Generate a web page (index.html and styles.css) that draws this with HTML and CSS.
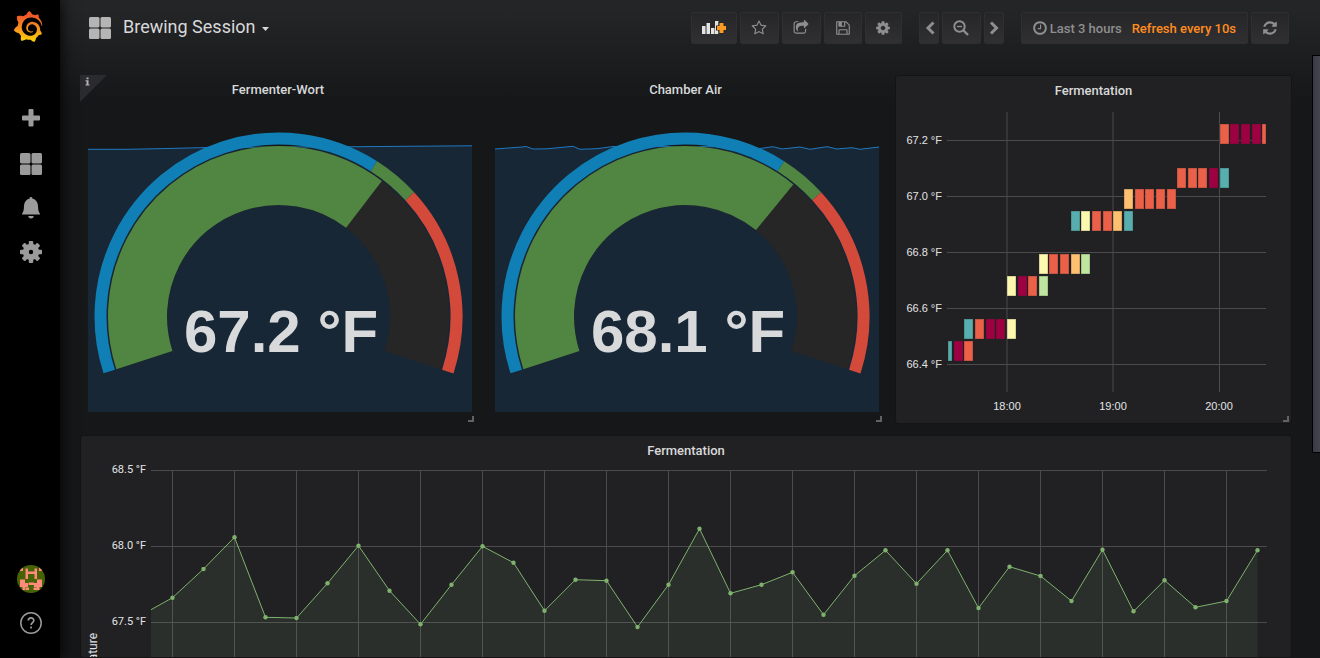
FILE: index.html
```html
<!DOCTYPE html>
<html lang="en">
<head>
<meta charset="utf-8">
<meta name="viewport" content="width=device-width, initial-scale=1">
<title>Brewing Session</title>
<link rel="stylesheet" href="styles.css">
</head>
<body>
<svg class="defs" aria-hidden="true">
  <symbol id="apps" viewBox="0 0 22 22">
    <rect width="10.500" height="10.500" x="0" y="0" rx="1.500"/><rect width="10.500" height="10.500" x="11.500" y="0" rx="1.500"/>
    <rect width="10.500" height="10.500" x="0" y="11.500" rx="1.500"/><rect width="10.500" height="10.500" x="11.500" y="11.500" rx="1.500"/>
  </symbol>
</svg>
<nav class="sidemenu" aria-label="Main menu">
  <a class="logo" href="#" aria-label="Home">
    <svg viewBox="0 0 351 365" width="30" height="31">
      <linearGradient id="flame" gradientUnits="userSpaceOnUse" x1="175" y1="400" x2="175" y2="60">
        <stop offset="0" stop-color="#ffe600"/><stop offset="0.5" stop-color="#f99b1c"/><stop offset="1" stop-color="#f05a28"/>
      </linearGradient>
      <path fill="url(#flame)" d="M342,161.2c-0.6-6.1-1.6-13.1-3.6-20.9c-2-7.7-5-16.2-9.4-25c-4.400-8.800-10.100-17.900-17.500-26.800c-2.900-3.500-6.100-6.900-9.500-10.200c5.100-20.300-6.200-37.900-6.200-37.900c-19.500-1.200-31.900,6.100-36.500,9.400c-0.800-0.300-1.500-0.700-2.300-1c-3.300-1.300-6.700-2.600-10.300-3.700c-3.500-1.100-7.100-2.100-10.800-3c-3.700-0.900-7.400-1.600-11.200-2.200c-0.700-0.100-1.300-0.200-2-0.300c-8.500-27.200-32.900-38.600-32.900-38.600c-27.300,17.300-32.400,41.500-32.400,41.500s-0.100,0.500-0.300,1.400c-1.500,0.400-3,0.900-4.500,1.300c-2.100,0.600-4.200,1.400-6.200,2.200c-2.100,0.800-4.100,1.600-6.200,2.500c-4.100,1.800-8.200,3.800-12.200,6c-3.900,2.200-7.700,4.600-11.400,7.100c-0.500-0.200-1-0.400-1-0.400c-37.800-14.400-71.300,2.900-71.300,2.900c-3.100,40.200,15.100,65.500,18.700,70.100c-0.900,2.500-1.700,5-2.500,7.500c-2.800,9.100-4.900,18.400-6.200,28.100c-0.200,1.400-0.400,2.800-0.500,4.200C18.800,192.700,8.500,228,8.500,228c29.100,33.500,63.100,35.600,63.100,35.600c0,0,0.100-0.100,0.100-0.100c4.300,7.700,9.300,15,14.900,21.900c2.400,2.900,4.800,5.600,7.400,8.300c-10.600,30.400,1.500,55.600,1.500,55.600c32.400,1.200,53.700-14.200,58.200-17.700c3.200,1.100,6.500,2.100,9.800,2.900c10,2.600,20.200,4.100,30.400,4.500c2.500,0.100,5.100,0.200,7.600,0.100l1.200,0l0.800,0l1.600,0l1.600-0.100l0,0.100c15.300,21.800,42.100,24.900,42.100,24.900c19.100-20.100,20.200-40.100,20.200-44.400l0,0c0,0,0-0.100,0-0.300c0-0.400,0-0.600,0-0.600l0,0c0-0.300,0-0.600,0-0.900c4-2.800,7.800-5.800,11.400-9.100c7.600-6.900,14.300-14.800,19.900-23.300c0.500-0.800,1-1.600,1.500-2.400c21.600,1.200,36.900-13.400,36.900-13.400c-3.600-22.500-16.400-33.500-19.100-35.600l0,0c0,0-0.100-0.100-0.300-0.200c-0.200-0.100-0.200-0.200-0.200-0.200c0,0,0,0,0,0c-0.100-0.100-0.300-0.200-0.500-0.300c0.100-1.400,0.200-2.700,0.300-4.100c0.200-2.400,0.200-4.900,0.200-7.300l0-1.800l0-0.900l0-0.500c0-0.600,0-0.400,0-0.600l-0.100-1.500l-0.100-2c0-0.700-0.100-1.300-0.200-1.900c-0.100-0.600-0.100-1.300-0.200-1.900l-0.200-1.900l-0.300-1.900c-0.400-2.500-0.800-4.900-1.400-7.400c-2.300-9.700-6.100-18.900-11-27.200c-5-8.300-11.200-15.600-18.300-21.800c-7-6.200-14.900-11.200-23.100-14.900c-8.300-3.700-16.900-6.100-25.500-7.200c-4.300-0.600-8.600-0.800-12.900-0.700l-1.600,0l-0.400,0c-0.100,0-0.600,0-0.500,0l-0.700,0l-1.600,0.100c-0.600,0-1.200,0.100-1.700,0.100c-2.200,0.200-4.400,0.500-6.500,0.900c-8.600,1.600-16.700,4.700-23.800,9c-7.100,4.300-13.300,9.600-18.300,15.600c-5,6-8.900,12.700-11.600,19.600c-2.700,6.900-4.200,14.100-4.600,21c-0.100,1.700-0.100,3.500-0.100,5.200c0,0.400,0,0.900,0,1.300l0.100,1.400c0.100,0.800,0.100,1.700,0.200,2.500c0.300,3.500,1,6.900,1.900,10.100c1.900,6.500,4.900,12.400,8.600,17.400c3.700,5,8.200,9.100,12.900,12.400c4.700,3.200,9.800,5.500,14.800,7c5,1.500,10,2.100,14.700,2.100c0.600,0,1.200,0,1.700,0c0.300,0,0.600,0,0.900,0c0.300,0,0.600,0,0.900-0.100c0.500,0,1-0.100,1.500-0.100c0.100,0,0.300,0,0.400-0.100l0.500-0.100c0.300,0,0.600-0.100,0.900-0.100c0.600-0.100,1.100-0.200,1.700-0.300c0.600-0.100,1.100-0.200,1.600-0.400c1.100-0.200,2.100-0.600,3.100-0.900c2-0.700,4-1.500,5.700-2.400c1.800-0.900,3.400-2,5-3c0.400-0.300,0.900-0.600,1.300-1c1.600-1.300,1.900-3.700,0.600-5.300c-1.100-1.400-3.100-1.800-4.700-0.900c-0.400,0.200-0.800,0.400-1.200,0.600c-1.400,0.700-2.800,1.300-4.300,1.800c-1.500,0.500-3.100,0.900-4.700,1.200c-0.800,0.100-1.600,0.200-2.500,0.300c-0.400,0-0.800,0.100-1.300,0.100c-0.400,0-0.900,0-1.200,0c-0.400,0-0.800,0-1.200,0c-0.500,0-1,0-1.500-0.100c0,0-0.300,0-0.100,0l-0.200,0l-0.300,0c-0.200,0-0.500,0-0.700-0.100c-0.500-0.100-0.900-0.100-1.400-0.200c-3.700-0.500-7.400-1.600-10.900-3.200c-3.600-1.600-7-3.800-10.100-6.600c-3.100-2.800-5.800-6.100-7.900-9.900c-2.100-3.800-3.600-8-4.300-12.400c-0.300-2.200-0.500-4.500-0.400-6.700c0-0.600,0.100-1.200,0.100-1.800c0,0.200,0-0.100,0-0.100l0-0.200l0-0.500c0-0.300,0.100-0.600,0.100-0.900c0.100-1.200,0.300-2.400,0.500-3.600c1.700-9.600,6.500-19,13.900-26.100c1.900-1.800,3.900-3.400,6-4.900c2.100-1.500,4.400-2.800,6.800-3.900c2.400-1.100,4.800-2,7.400-2.700c2.500-0.700,5.100-1.100,7.800-1.400c1.300-0.100,2.600-0.200,4-0.200c0.400,0,0.600,0,0.900,0l1.100,0l0.700,0c0.300,0,0,0,0.100,0l0.300,0l1.100,0.100c2.900,0.200,5.700,0.600,8.500,1.300c5.600,1.200,11.100,3.300,16.200,6.100c10.200,5.700,18.900,14.500,24.200,25.100c2.700,5.300,4.600,11,5.500,16.900c0.200,1.500,0.400,3,0.500,4.500l0.100,1.100l0.100,1.100c0,0.400,0,0.800,0,1.100c0,0.400,0,0.800,0,1.100l0,1l0,1.100c0,0.700-0.100,1.900-0.100,2.600c-0.100,1.600-0.300,3.300-0.500,4.900c-0.200,1.600-0.500,3.200-0.800,4.800c-0.300,1.600-0.700,3.200-1.100,4.700c-0.800,3.100-1.800,6.200-3,9.300c-2.400,6-5.600,11.800-9.400,17.100c-7.700,10.600-18.200,19.200-30.200,24.700c-6,2.700-12.300,4.700-18.800,5.700c-3.200,0.600-6.500,0.900-9.800,1l-0.600,0l-0.500,0l-1.100,0l-1.600,0l-0.800,0c0.400,0-0.100,0-0.100,0l-0.300,0c-1.800,0-3.500-0.100-5.300-0.300c-7-0.500-13.900-1.800-20.700-3.700c-6.700-1.900-13.200-4.600-19.400-7.800c-12.300-6.600-23.400-15.600-32-26.500c-4.300-5.400-8.100-11.300-11.200-17.400c-3.100-6.100-5.600-12.600-7.400-19.100c-1.800-6.600-2.900-13.300-3.400-20.100l-0.100-1.300l0-0.300l0-0.300l0-0.600l0-1.100l0-0.300l0-0.400l0-0.800l0-1.600l0-0.300c0,0,0,0.100,0-0.100l0-0.600c0-0.800,0-1.700,0-2.500c0.100-3.300,0.400-6.800,0.800-10.200c0.400-3.400,1-6.900,1.700-10.300c0.700-3.400,1.500-6.800,2.500-10.200c1.900-6.700,4.300-13.200,7.100-19.300c5.700-12.200,13.100-23.100,22-31.800c2.200-2.200,4.500-4.200,6.900-6.200c2.400-1.900,4.900-3.700,7.500-5.400c2.500-1.700,5.200-3.200,7.900-4.600c1.300-0.700,2.700-1.400,4.100-2c0.700-0.300,1.400-0.600,2.100-0.900c0.700-0.300,1.400-0.600,2.100-0.900c2.800-1.200,5.700-2.200,8.700-3.100c0.700-0.200,1.500-0.400,2.200-0.700c0.700-0.200,1.500-0.400,2.200-0.600c1.500-0.400,3-0.800,4.500-1.100c0.700-0.200,1.500-0.300,2.300-0.500c0.800-0.200,1.500-0.300,2.300-0.500c0.800-0.100,1.500-0.300,2.300-0.400l1.100-0.200l1.200-0.200c0.800-0.100,1.500-0.200,2.300-0.300c0.900-0.100,1.700-0.200,2.600-0.300c0.700-0.100,1.900-0.200,2.600-0.300c0.500-0.100,1.100-0.100,1.600-0.200l1.100-0.100l0.500-0.100l0.600,0c0.900-0.100,1.700-0.100,2.600-0.200l1.300-0.100c0,0,0.500,0,0.100,0l0.300,0l0.600,0c0.700,0,1.500-0.100,2.200-0.100c2.900-0.100,5.900-0.100,8.800,0c5.800,0.200,11.500,0.900,17,1.900c11.100,2.100,21.500,5.600,31,10.300c9.500,4.600,17.900,10.300,25.300,16.500c0.500,0.400,0.900,0.800,1.400,1.200c0.400,0.400,0.900,0.800,1.300,1.200c0.900,0.800,1.700,1.600,2.600,2.400c0.900,0.800,1.700,1.600,2.500,2.400c0.800,0.800,1.600,1.600,2.400,2.500c3.100,3.300,6,6.600,8.600,10c5.200,6.700,9.400,13.500,12.700,19.900c0.200,0.400,0.400,0.800,0.600,1.200c0.200,0.400,0.400,0.800,0.600,1.200c0.400,0.800,0.800,1.600,1.100,2.400c0.400,0.800,0.700,1.500,1.100,2.300c0.300,0.800,0.700,1.500,1,2.300c1.200,3,2.400,5.900,3.300,8.600c1.500,4.400,2.600,8.300,3.500,11.700c0.300,1.400,1.600,2.300,3,2.100c1.500-0.100,2.600-1.300,2.600-2.800C342.600,170.400,342.500,166.100,342,161.200z"/>
    </svg>
  </a>
  <a class="side-link" href="#" aria-label="Create">
    <svg class="side-icon" viewBox="0 0 22 22"><path d="M8.500 3a1 1 0 0 1 1-1h3a1 1 0 0 1 1 1v5.500h5.500a1 1 0 0 1 1 1v3a1 1 0 0 1-1 1h-5.500v5a1 1 0 0 1-1 1h-3a1 1 0 0 1-1-1v-5h-5.500a1 1 0 0 1-1-1v-3a1 1 0 0 1 1-1h5.500z"/></svg>
  </a>
  <a class="side-link" href="#" aria-label="Dashboards"><svg class="side-icon"><use href="#apps"/></svg></a>
  <a class="side-link" href="#" aria-label="Alerting">
    <svg class="side-icon" viewBox="0 0 22 22"><path d="M11 0q1.400 0 1.400 1.400C16 2.300 17.800 5 18 9c.1 4 .6 5.700 1.600 7q.4.600.4 1.500H2q0-.9.400-1.500c1-1.300 1.500-3 1.600-7 .2-4 2-6.700 5.600-7.600Q9.600 0 11 0z"/><path d="M8.300 19h5.400a2.700 2.400 0 0 1-5.400 0z"/></svg>
  </a>
  <a class="side-link" href="#" aria-label="Configuration">
    <svg class="side-icon" viewBox="0 0 22 22"><circle cx="11" cy="11" r="5.200" fill="none" stroke="#9b9b9b" stroke-width="6"/>
      <g id="teeth"><rect x="8.800" y="0" width="4.400" height="4.500" rx="1"/><rect x="8.800" y="17.500" width="4.400" height="4.500" rx="1"/><rect x="0" y="8.800" width="4.500" height="4.400" rx="1"/><rect x="17.500" y="8.800" width="4.500" height="4.400" rx="1"/></g>
      <use href="#teeth" transform="rotate(45 11 11)"/></svg>
  </a>
  <div class="side-bottom">
    <a class="side-link" href="#" aria-label="Profile">
      <svg class="avatar" viewBox="0 0 28 28">
        <clipPath id="round"><circle cx="14" cy="14" r="14"/></clipPath>
        <g clip-path="url(#round)">
          <rect width="28" height="28" fill="#466205"/>
          <path fill="#ff8b7c" d="M3 3h3v3H3zM22 3h3v3h-3zM8.500 3.500H11V6.500h6.500v-3H20V14h-2.500V9H11v5H8.500zM3 14.500h5v3.500h3v4H8.500v3H5.500v-3H3zM20 14.500h5V22h-2.500v3h-3v-3h-2.500v-4h3zM11.500 17.500h5.500v2.500h-5.500zM9 22.500h3v2.500H9zM16.500 22.500h3v2.500h-3z"/>
        </g>
      </svg>
    </a>
    <a class="side-link" href="#" aria-label="Help">
      <svg class="side-icon help" viewBox="0 0 22 22"><circle cx="11" cy="11" r="10.200" stroke-width="1.500"/><path stroke-width="1.700" d="M8.300 8.600c.1-3.600 5.500-3.500 5.500-.2 0 2-2.700 2.300-2.700 4.700M11.100 14.600v1.800"/></svg>
    </a>
  </div>
</nav>

<div class="page">
  <header class="toolbar">
    <h1 class="dash-title">
      <button class="title-button" type="button">
        <svg class="title-icon"><use href="#apps"/></svg>
        <span class="title-text">Brewing Session</span>
        <svg class="caret" viewBox="0 0 7 4"><path d="M0 0h7L3.500 4z"/></svg>
      </button>
    </h1>
    <div class="button-group">
      <button class="btn btn-add" type="button" aria-label="Add panel">
        <svg viewBox="0 0 24 14" width="24" height="14">
          <path fill="#e3e3e3" d="M0 5h3.500v8H0zM4.500 2h3.500v11H4.500zM9 7h3.500v6H9zM13 0h3.500v13H13z"/>
          <path fill="#262628" d="M16.500 1h6v3.500H24v5h-1.500V13h-6V9.500H14v-5h2.500z"/>
          <path fill="#fa9a22" d="M17.500 2h4v3H24v4h-2.500v3h-4V9H15V5h2.500z"/>
        </svg>
      </button>
      <button class="btn" type="button" aria-label="Mark as favorite"><svg class="icon" viewBox="0 0 1792 1792"><path d="M1201 1004l306-297-422-62-189-382-189 382-422 62 306 297-73 421 378-199 377 199zm527-357q0 22-26 48l-363 354 86 500q1 7 1 20 0 50-41 50-19 0-40-12l-449-236-449 236q-22 12-40 12-21 0-31.500-14.500t-10.500-35.500q0-6 2-20l86-500-364-354q-25-27-25-48 0-37 56-46l502-73 225-455q19-41 49-41t49 41l225 455 502 73q56 9 56 46z"/></svg></button>
      <button class="btn" type="button" aria-label="Share dashboard"><svg class="icon" viewBox="0 0 1792 1792"><path d="M1472 989v259q0 119-84.500 203.500t-203.500 84.500h-832q-119 0-203.500-84.500t-84.500-203.500v-832q0-119 84.500-203.500t203.500-84.500h255q13 0 22.500 9.500t9.500 22.500q0 27-26 32-77 26-133 60-10 4-16 4h-112q-66 0-113 47t-47 113v832q0 66 47 113t113 47h832q66 0 113-47t47-113v-214q0-19 18-29 28-13 54-37 16-16 35-8 21 9 21 29zm237-496l-384 384q-18 19-45 19-12 0-25-5-39-17-39-59v-192h-160q-323 0-438 131-119 137-74 473 3 23-20 34-8 2-12 2-16 0-26-13-10-14-21-31t-39.500-68.500-49.500-99.500-38.500-114-17.500-122q0-49 3.500-91t14-90 28-88 47-81.500 68.500-74 94.500-61.500 124.500-48.500 159.500-30.500 196.500-11h160v-192q0-42 39-59 13-5 25-5 26 0 45 19l384 384q19 19 19 45t-19 45z"/></svg></button>
      <button class="btn btn-save" type="button" aria-label="Save dashboard"><svg class="icon" viewBox="0 0 1792 1792"><path d="M512 1536h768v-384h-768v384zm896 0h128v-896q0-14-10-38.500t-20-34.500l-281-281q-10-10-34-20t-39-10v416q0 40-28 68t-68 28h-576q-40 0-68-28t-28-68v-416h-128v1280h128v-416q0-40 28-68t68-28h832q40 0 68 28t28 68v416zm-384-928v-320q0-13-9.500-22.500t-22.500-9.500h-192q-13 0-22.500 9.500t-9.500 22.500v320q0 13 9.500 22.500t22.500 9.500h192q13 0 22.500-9.500t9.500-22.500zm640 32v928q0 40-28 68t-68 28h-1344q-40 0-68-28t-28-68v-1344q0-40 28-68t68-28h928q40 0 88 20t76 48l280 280q28 28 48 76t20 88z"/></svg></button>
      <button class="btn btn-settings" type="button" aria-label="Settings"><svg class="icon" viewBox="0 0 1792 1792"><path d="M1152 896q0-106-75-181t-181-75-181 75-75 181 75 181 181 75 181-75 75-181zm512-109v222q0 12-8 23t-20 13l-185 28q-19 54-39 91 35 50 107 138 10 12 10 25t-9 23q-27 37-99 108t-94 71q-12 0-26-9l-138-108q-44 23-91 38-16 136-29 186-7 28-36 28h-222q-14 0-24.500-8.500t-11.500-21.500l-28-184q-49-16-90-37l-141 107q-10 9-25 9-14 0-25-11-126-114-165-168-7-10-7-23 0-12 8-23 15-21 51-66.500t54-70.500q-27-50-41-99l-183-27q-13-2-21-12.500t-8-23.500v-222q0-12 8-23t19-13l186-28q14-46 39-92-40-57-107-138-10-12-10-24 0-10 9-23 26-36 98.500-107.500t94.500-71.500q13 0 26 10l138 107q44-23 91-38 16-136 29-186 7-28 36-28h222q14 0 24.500 8.500t11.500 21.500l28 184q49 16 90 37l142-107q9-9 24-9 13 0 25 10 129 119 165 170 7 8 7 22 0 12-8 23-15 21-51 66.500t-54 70.500q26 50 41 98l183 28q13 2 21 12.500t8 23.500z"/></svg></button>
    </div>
    <div class="button-group">
      <button class="btn btn-step" type="button" aria-label="Shift time back"><svg class="icon line" viewBox="0 0 16 16"><path stroke-width="3" d="M12.500 2.500 7 8l5.500 5.500"/></svg></button>
      <button class="btn" type="button" aria-label="Zoom out"><svg class="icon line" viewBox="0 0 16 16"><circle cx="6.500" cy="6.500" r="5.200" stroke-width="2"/><path stroke-width="2.400" d="m10.500 10.500 4.500 4.500"/><path stroke-width="1.400" d="M4 6.500h5"/></svg></button>
      <button class="btn btn-step" type="button" aria-label="Shift time forward"><svg class="icon line" viewBox="0 0 16 16"><path stroke-width="3" d="M5 2.500 10.500 8 5 13.500"/></svg></button>
    </div>
    <div class="button-group">
      <button class="btn btn-time" type="button">
        <svg class="icon" viewBox="0 0 1792 1792"><path d="M1024 544v448q0 14-9 23t-23 9h-320q-14 0-23-9t-9-23v-64q0-14 9-23t23-9h224v-352q0-14 9-23t23-9h64q14 0 23 9t9 23zm416 352q0-148-73-273t-198-198-273-73-273 73-198 198-73 273 73 273 198 198 273 73 273-73 198-198 73-273zm224 0q0 209-103 385.500t-279.500 279.500-385.500 103-385.500-103-279.500-279.500-103-385.500 103-385.500 279.500-279.500 385.500-103 385.500 103 279.500 279.500 103 385.500z"/></svg>
        <span>Last 3 hours</span>
        <span class="refresh-rate">Refresh every 10s</span>
      </button>
      <button class="btn btn-refresh" type="button" aria-label="Refresh"><svg class="icon" viewBox="0 0 1792 1792"><path d="M1639 1056q0 5-1 7-64 268-268 434.500t-478 166.500q-146 0-282.500-55t-243.500-157l-129 129q-19 19-45 19t-45-19-19-45v-448q0-26 19-45t45-19h448q26 0 45 19t19 45-19 45l-137 137q71 66 161 102t187 36q134 0 250-65t186-179q11-17 53-117 8-23 30-23h192q13 0 22.500 9.500t9.500 22.500zm25-800v448q0 26-19 45t-45 19h-448q-26 0-45-19t-19-45 19-45l138-138q-148-137-349-137-134 0-250 65t-186 179q-11 17-53 117-8 23-30 23h-199q-13 0-22.500-9.500t-9.500-22.500v-7q65-268 270-434.500t480-166.500q146 0 284 55.500t245 156.500l130-129q19-19 45-19t45 19 19 45z"/></svg></button>
    </div>
  </header>

  <main class="dashboard">
    <section class="panel gauge-panel">
      <svg class="info-corner" viewBox="0 0 27 27" aria-label="Panel info"><path fill="#2b2b2f" d="M0 0h27L0 27z"/><path fill="#b4b4b4" d="M6.500 2.500h2v1.800h-2zM5.500 5.300h3v4.200h1v1h-4v-1h1V6.300h-1z"/></svg>
      <h2 class="panel-title">Fermenter-Wort</h2>
      <svg class="chart" viewBox="0 0 384 309" role="img" aria-label="Fermenter-Wort gauge">
        <path class="spark-area" d="M0 46.300 40 46.300 80 45.500 120 44.500 200 44 260 43.800 330 43.200 384 42.800V309H0z"/>
        <path class="spark-line" d="M0 46.300 40 46.300 80 45.500 120 44.500 200 44 260 43.800 330 43.200 384 42.800"/>
        <g transform="translate(190.500 213.500) rotate(162)">
          <circle class="dial rest" r="141" pathLength="360" stroke-dasharray="216 360"/>
          <circle class="dial value" r="141" pathLength="360" stroke-dasharray="145.300 360"/>
          <circle class="ring cold" r="178" pathLength="360" stroke-dasharray="140.400 360"/>
          <circle class="ring good" r="178" pathLength="360" stroke-dasharray="15.100 360" transform="rotate(140.400)"/>
          <circle class="ring hot" r="178" pathLength="360" stroke-dasharray="60.500 360" transform="rotate(155.500)"/>
        </g>
        <text class="reading" x="193" y="249">67.2 °F</text>
      </svg>
      <span class="resize"></span>
    </section>

    <section class="panel gauge-panel">
      <h2 class="panel-title">Chamber Air</h2>
      <svg class="chart" viewBox="0 0 385 309" role="img" aria-label="Chamber Air gauge">
        <path class="spark-area" d="M0 46 27 44 31 43.500 38 46 52 45.800 78 43.300 85 46.300 102 45.700 118 43.500 220 43.700 233 46.300 265 45.500 278 43.700 287 46 305 44 315 46.300 332 43.700 342 46 357 44.700 365 46.300 384 44V309H0z"/>
        <path class="spark-line" d="M0 46 27 44 31 43.500 38 46 52 45.800 78 43.300 85 46.300 102 45.700 118 43.500 220 43.700 233 46.300 265 45.500 278 43.700 287 46 305 44 315 46.300 332 43.700 342 46 357 44.700 365 46.300 384 44"/>
        <g transform="translate(190.500 213.500) rotate(162)">
          <circle class="dial rest" r="141" pathLength="360" stroke-dasharray="216 360"/>
          <circle class="dial value" r="141" pathLength="360" stroke-dasharray="147.200 360"/>
          <circle class="ring cold" r="178" pathLength="360" stroke-dasharray="140.400 360"/>
          <circle class="ring good" r="178" pathLength="360" stroke-dasharray="15.100 360" transform="rotate(140.400)"/>
          <circle class="ring hot" r="178" pathLength="360" stroke-dasharray="60.500 360" transform="rotate(155.500)"/>
        </g>
        <text class="reading" x="193" y="249">68.1 °F</text>
      </svg>
      <span class="resize"></span>
    </section>

    <section class="panel framed">
      <h2 class="panel-title">Fermentation</h2>
      <svg class="chart heatmap" viewBox="0 0 395 319" role="img" aria-label="Fermentation heatmap">
        <path class="grid" d="M51 36.500H370M51 92.500H370M51 148.500H370M51 204.500H370M51 260.500H370M111 8V288M217 8V288M323.500 8V288"/>
        <g text-anchor="end">
          <text x="46" y="40">67.2 °F</text><text x="46" y="96">67.0 °F</text><text x="46" y="152">66.8 °F</text><text x="46" y="208">66.6 °F</text><text x="46" y="264">66.4 °F</text>
        </g>
        <g text-anchor="middle"><text x="111" y="306">18:00</text><text x="217" y="306">19:00</text><text x="323" y="306">20:00</text></g>
        <g transform="translate(0 20)"><rect class="cell c2" x="324"/><rect class="cell c1" x="334"/><rect class="cell c1" x="345"/><rect class="cell c1" x="356"/><rect class="cell c2 cut" x="366"/></g>
        <g transform="translate(0 64)"><rect class="cell c2" x="281"/><rect class="cell c2" x="292"/><rect class="cell c2" x="302"/><rect class="cell c1" x="313"/><rect class="cell c6" x="324"/></g>
        <g transform="translate(0 85)"><rect class="cell c3" x="228"/><rect class="cell c2" x="239"/><rect class="cell c2" x="249"/><rect class="cell c2" x="260"/><rect class="cell c2" x="271"/></g>
        <g transform="translate(0 107)"><rect class="cell c6" x="175"/><rect class="cell c4" x="185"/><rect class="cell c2" x="196"/><rect class="cell c2" x="207"/><rect class="cell c3" x="217"/><rect class="cell c6" x="228"/></g>
        <g transform="translate(0 150)"><rect class="cell c4" x="143"/><rect class="cell c2" x="153"/><rect class="cell c2" x="164"/><rect class="cell c3" x="175"/><rect class="cell c5" x="185"/></g>
        <g transform="translate(0 172)"><rect class="cell c4" x="111"/><rect class="cell c1" x="122"/><rect class="cell c2" x="132"/><rect class="cell c5" x="143"/></g>
        <g transform="translate(0 215)"><rect class="cell c6" x="68"/><rect class="cell c2" x="79"/><rect class="cell c1" x="90"/><rect class="cell c1" x="100"/><rect class="cell c4" x="111"/></g>
        <g transform="translate(0 237)"><rect class="cell c6 cut" x="52"/><rect class="cell c1" x="58"/><rect class="cell c2" x="68"/></g>
      </svg>
      <span class="resize"></span>
    </section>

    <section class="panel framed wide">
      <h2 class="panel-title">Fermentation</h2>
      <svg class="chart series" viewBox="0 0 1210 193" role="img" aria-label="Fermentation temperature graph">
        <marker id="dot" viewBox="0 0 5 5" refX="2.500" refY="2.500" markerWidth="5" markerHeight="5" markerUnits="userSpaceOnUse"><circle cx="2.500" cy="2.500" r="2.200" fill="#7eb26d"/></marker>
        <path class="grid" d="M70 6.500H1186M70 82.500H1186M70 158.500H1186M91.500 6V193M153.500 6V193M215.500 6V193M277.500 6V193M339.500 6V193M401.500 6V193M463.500 6V193M525.500 6V193M587.500 6V193M649.500 6V193M711.500 6V193M773.500 6V193M835.500 6V193M897.500 6V193M959.500 6V193M1021.500 6V193M1083.500 6V193M1145.500 6V193"/>
        <path class="series-area" d="M70 145.700 91.500 133.700 122.500 105 153.500 73.300 184.500 153.300 215.500 154 246.500 119.300 277.500 81.700 308.500 126.700 339.500 160.300 370.500 120.700 401.500 82.300 432.500 98.700 463.500 146.700 494.500 115.700 525.500 116.700 556.500 163 587.500 120.700 618.500 64.700 649.500 129.300 680.500 120.700 711.500 108.300 742.500 150.700 773.500 111.700 804.500 86.300 835.500 119.700 866.500 86.300 897.500 144 928.500 102.700 959.500 112 990.500 137 1021.500 85.700 1052.500 147.300 1083.500 116.300 1114.500 143.300 1145.500 137 1176.500 86.300V193H70z"/>
        <path class="series-line" d="M70 145.700 91.500 133.700 122.500 105 153.500 73.300 184.500 153.300 215.500 154 246.500 119.300 277.500 81.700 308.500 126.700 339.500 160.300 370.500 120.700 401.500 82.300 432.500 98.700 463.500 146.700 494.500 115.700 525.500 116.700 556.500 163 587.500 120.700 618.500 64.700 649.500 129.300 680.500 120.700 711.500 108.300 742.500 150.700 773.500 111.700 804.500 86.300 835.500 119.700 866.500 86.300 897.500 144 928.500 102.700 959.500 112 990.500 137 1021.500 85.700 1052.500 147.300 1083.500 116.300 1114.500 143.300 1145.500 137 1176.500 86.300"/>
        <g text-anchor="end"><text x="65" y="9">68.5 °F</text><text x="65" y="85">68.0 °F</text><text x="65" y="161">67.5 °F</text><text class="axis-name" transform="translate(16 169) rotate(-90)">Temperature</text></g>
      </svg>
    </section>
  </main>
  <div class="scroll-thumb" aria-hidden="true"></div>
</div>
</body>
</html>
```
FILE: styles.css
```css
* {
  box-sizing: border-box;
}

body {
  margin: 0;
  display: flex;
  height: 100vh;
  overflow: hidden;
  background: #161719;
  color: #d8d9da;
  font-family: Roboto, "Liberation Sans", sans-serif;
  font-size: 13px;
}

svg {
  display: block;
}

.defs {
  position: absolute;
  width: 0;
  height: 0;
}

button {
  font: inherit;
  color: inherit;
  cursor: pointer;
}

/* Side menu */
.sidemenu {
  flex: none;
  width: 60px;
  display: flex;
  flex-direction: column;
  background: #000;
  box-shadow: 0 0 15px #000;
  z-index: 1;
}

.logo {
  padding: 11px 0 0 13px;
  margin-bottom: 54px;
}

.side-link {
  display: flex;
  align-items: center;
  justify-content: center;
  height: 44px;
  padding-left: 2px;
}

.logo + .side-link {
  margin-bottom: 2px;
}

.side-icon {
  width: 22px;
  height: 22px;
  fill: #9b9b9b;
}

.side-icon.help {
  fill: none;
  stroke: #9b9b9b;
}

.side-bottom {
  margin-top: auto;
  padding-bottom: 13px;
}

.avatar {
  width: 28px;
  height: 28px;
}

/* Page and toolbar */
.page {
  position: relative;
  flex: 1;
  min-width: 0;
  overflow: hidden;
  background: linear-gradient(180deg, #242527 10px, #161719 100px);
}

.toolbar {
  display: flex;
  align-items: center;
  gap: 17px;
  height: 56px;
  padding: 0 31px 0 29px;
}

.dash-title {
  flex: 1;
  margin: 0;
  font-size: 18px;
  font-weight: 400;
}

.title-button {
  display: flex;
  align-items: center;
  padding: 0;
  border: 0;
  background: none;
}

.title-icon {
  width: 22px;
  height: 22px;
  margin-right: 12px;
  fill: #b5b5b5;
}

.title-text {
  padding-bottom: 3px;
}

.caret {
  width: 7px;
  height: 4px;
  margin: 2px 0 0 6px;
  fill: #d8d9da;
}

.button-group {
  display: flex;
  gap: 3px;
}

.btn {
  display: flex;
  align-items: center;
  justify-content: center;
  width: 39px;
  height: 32px;
  padding: 0;
  border: 1px solid #2f2f32;
  border-radius: 2px;
  background: linear-gradient(180deg, #262628, #303032);
  color: #8e8e8e;
  font-weight: 500;
}

.btn-add {
  width: 46px;
}

.btn-save,
.btn-refresh {
  width: 38px;
}

.btn-settings {
  width: 37px;
}

.btn-step {
  width: 20px;
}

.btn-time {
  width: auto;
  padding: 0 11px 0 10px;
}

.icon {
  flex: none;
  width: 16px;
  height: 16px;
  fill: currentColor;
}

.icon.line {
  fill: none;
  stroke: currentColor;
}

.btn-time .icon {
  margin-right: 2px;
}

.refresh-rate {
  margin-left: 10px;
  color: #ff8c1f;
}

/* Dashboard grid */
.dashboard {
  display: grid;
  grid-template-columns: 397fr 398fr 397fr;
  gap: 11px 10px;
  padding: 19px 28px 0 20px;
}

.panel {
  position: relative;
  min-width: 0;
}

.framed {
  border: 1px solid #141414;
  border-radius: 3px;
  background: #212124;
}

.wide {
  grid-column: 1 / -1;
}

.panel-title {
  margin: 0;
  padding-top: 2px;
  font-size: 13px;
  font-weight: 500;
  line-height: 26px;
  text-align: center;
}

.gauge-panel {
  padding: 0 5px 12px 8px;
}

.gauge-panel .panel-title {
  padding-right: 4px;
}

.info-corner {
  position: absolute;
  top: 0;
  left: 0;
  width: 27px;
  height: 27px;
}

.resize {
  position: absolute;
  right: 3px;
  bottom: 2px;
  width: 6px;
  height: 6px;
  border: solid #626264;
  border-width: 0 2px 2px 0;
}

.framed .resize {
  right: 2px;
  bottom: 1px;
}

/* Charts */
.chart {
  width: 100%;
  height: auto;
}

.chart text {
  fill: #e3e4e5;
  font-size: 11px;
}

.chart .reading {
  fill: #d8d9da;
  font: bold 60px "Liberation Sans", Arial, sans-serif;
  text-anchor: middle;
}

.chart .axis-name {
  font-size: 12px;
}

.heatmap text {
  font-family: "Liberation Sans", Arial, sans-serif;
}

.grid {
  fill: none;
  stroke: #4b4b4d;
}

.spark-area {
  fill: #182735;
}

.spark-line {
  fill: none;
  stroke: #1f78c1;
}

.dial,
.ring {
  fill: none;
}

.dial {
  stroke-width: 59px;
}

.ring {
  stroke-width: 12px;
}

.rest {
  stroke: #262626;
}

.value,
.good {
  stroke: #508642;
}

.cold {
  stroke: #107fb5;
}

.hot {
  stroke: #d44a3a;
}

.cell {
  width: 9px;
  height: 20px;
  stroke: #212124;
  stroke-opacity: 0.35;
}

.cut {
  width: 4px;
}

.c1 { fill: #9e0142; }
.c2 { fill: #ea6049; }
.c3 { fill: #fdbf70; }
.c4 { fill: #fdf8b0; }
.c5 { fill: #bfe5a0; }
.c6 { fill: #58aeae; }

.series-area {
  fill: #7eb26d;
  fill-opacity: 0.1;
}

.series-line {
  fill: none;
  stroke: #7eb26d;
  marker-mid: url(#dot);
  marker-end: url(#dot);
}

.scroll-thumb {
  position: absolute;
  top: 55px;
  right: 0;
  bottom: 205px;
  width: 8px;
  border: 1px solid #000;
  border-right: 0;
  background: linear-gradient(90deg, #3a3946, #44444d);
}
```
